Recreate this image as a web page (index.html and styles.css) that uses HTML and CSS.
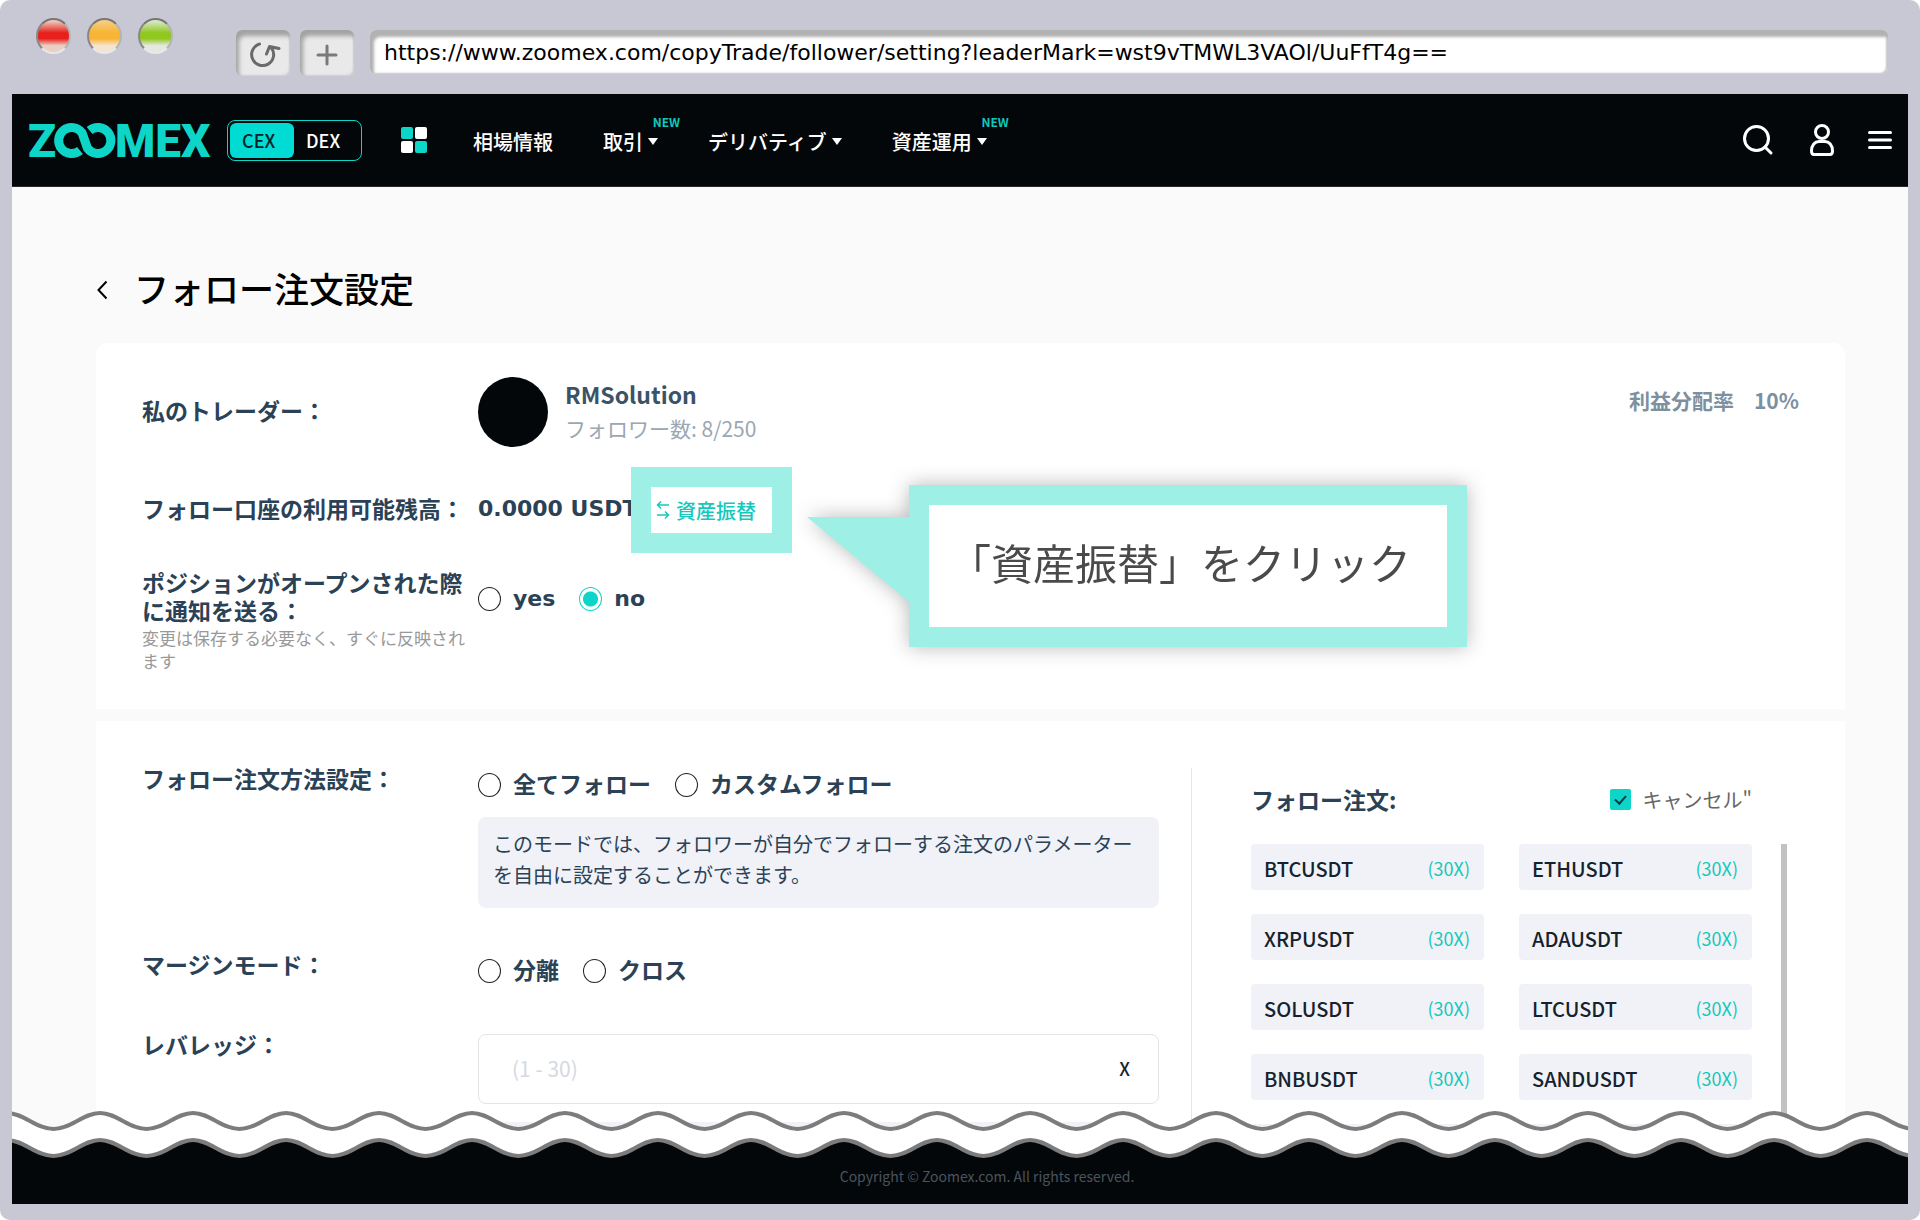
FILE: index.html
```html
<!DOCTYPE html>
<html lang="ja">
<head>
<meta charset="utf-8">
<title>フォロー注文設定 | ZOOMEX</title>
<link rel="stylesheet" href="styles.css">
</head>
<body>
<div class="window">
  <div class="chrome">
    <div class="lights">
      <span class="light light-red"></span>
      <span class="light light-amber"></span>
      <span class="light light-green"></span>
    </div>
    <div class="tools">
      <button class="tool" type="button" aria-label="再読み込み">
        <svg width="36" height="28" viewBox="-4 0 36 28" fill="none" stroke="#6a6a6a" stroke-width="3" stroke-linecap="round" stroke-linejoin="round"><path d="M10.500 3A11 11 0 1 0 22.500 7M17.500 13L20.500 5.500L30 7.500"/></svg>
      </button>
      <button class="tool" type="button" aria-label="新しいタブ">
        <svg width="22" height="22" viewBox="0 0 22 22" fill="none" stroke="#7a7a7a" stroke-width="3" stroke-linecap="round"><path d="M11 2V20M2 11H20"/></svg>
      </button>
    </div>
    <input class="address" type="text" aria-label="アドレス" value="https://www.zoomex.com/copyTrade/follower/setting?leaderMark=wst9vTMWL3VAOl/UuFfT4g==">
  </div>

  <div class="page">
    <header class="header">
      <a class="logo" href="#" aria-label="ZOOMEX">
        <svg class="logo-mark" width="184" height="37" viewBox="0 0 184 37">
          <text class="logo-text" x="-1" y="35">Z</text>
          <path d="M51 28.500A13 13 0 1 1 53 10.700L58.500 26.300A13 13 0 1 0 60.600 8.500" fill="none" stroke="#0dd5c8" stroke-width="9"/>
          <text class="logo-text" x="86" y="35">MEX</text>
        </svg>
      </a>
      <div class="switch">
        <button class="switch-item is-on" type="button">CEX</button>
        <button class="switch-item" type="button">DEX</button>
      </div>
      <svg class="apps" width="26" height="26" viewBox="0 0 26 26"><rect x="0" y="0" width="12" height="12" rx="2" fill="#0dd5c8"/><rect x="14" y="0" width="12" height="12" rx="2" fill="#fff"/><rect x="0" y="14" width="12" height="12" rx="2" fill="#fff"/><rect x="14" y="14" width="12" height="12" rx="2" fill="#0dd5c8"/></svg>
      <nav class="nav">
        <a class="nav-link" href="#">相場情報</a>
        <a class="nav-link has-menu" href="#">取引<span class="badge">NEW</span></a>
        <a class="nav-link has-menu" href="#">デリバティブ</a>
        <a class="nav-link has-menu" href="#">資産運用<span class="badge">NEW</span></a>
      </nav>
      <div class="actions">
        <button class="icon-button" type="button" aria-label="検索">
          <svg width="34" height="32" viewBox="0 0 34 32" fill="none" stroke="#fff" stroke-width="3" stroke-linecap="round"><circle cx="14.500" cy="14.500" r="12"/><path d="M23 23L29 29"/></svg>
        </button>
        <button class="icon-button" type="button" aria-label="アカウント">
          <svg width="24" height="32" viewBox="0 0 24 32" fill="none" stroke="#fff" stroke-width="3"><circle cx="12" cy="8" r="6.500"/><path d="M1.500 27C1.500 21 5 17.500 9 17.500H15C19 17.500 22.500 21 22.500 27Q22.500 30.500 20 30.500H4Q1.500 30.500 1.500 27Z"/></svg>
        </button>
        <button class="icon-button" type="button" aria-label="メニュー">
          <svg width="24" height="18" viewBox="0 0 24 18" fill="none" stroke="#fff" stroke-width="3" stroke-linecap="round"><path d="M1.500 1.500H22.500M1.500 9H22.500M1.500 16.500H22.500"/></svg>
        </button>
      </div>
    </header>

    <main class="main">
      <div class="title-bar">
        <a class="back" href="#" aria-label="戻る"><svg width="12" height="20" viewBox="0 0 12 20" fill="none" stroke="#000" stroke-width="2"><path d="M10.500 1.500L2.500 10L10.500 18.500"/></svg></a>
        <h1 class="title">フォロー注文設定</h1>
      </div>

      <section class="card card-account">
        <div class="row row-trader">
          <span class="label">私のトレーダー：</span>
          <div class="trader">
            <span class="avatar"></span>
            <div class="trader-text">
              <p class="trader-name">RMSolution</p>
              <p class="trader-count">フォロワー数: 8/250</p>
            </div>
            <p class="share"><span>利益分配率</span><span>10%</span></p>
          </div>
        </div>
        <div class="row row-balance">
          <span class="label">フォロー口座の利用可能残高：</span>
          <div class="balance">
            <span>0.0000 USDT</span>
            <button class="transfer" type="button">
              <svg width="14" height="20" viewBox="0 0 14 20" fill="none" stroke="#14c8bc" stroke-width="1.500"><path d="M13 5H2M5 1.500L1.500 5L5 8.500M1 15H12M9 11.500L12.500 15L9 18.500"/></svg>資産振替
            </button>
          </div>
        </div>
        <div class="row">
          <div>
            <p class="label">ポジションがオープンされた際<br>に通知を送る：</p>
            <p class="note">変更は保存する必要なく、すぐに反映され<br>ます</p>
          </div>
          <div class="choices choices-notify">
            <label class="choice choice-latin"><input class="radio" type="radio" name="notify">yes</label>
            <label class="choice choice-latin"><input class="radio" type="radio" name="notify" checked>no</label>
          </div>
        </div>
        <aside class="callout">
          <svg class="callout-tail" width="103" height="86" viewBox="0 0 103 86"><path d="M0 0H103V86Z" fill="#9ef0e6"/></svg>
          <p class="callout-text">「資産振替」をクリック</p>
        </aside>
      </section>

      <section class="card card-orders">
        <form class="form">
          <div class="row row-method">
            <span class="label">フォロー注文方法設定：</span>
            <div>
              <div class="choices">
                <label class="choice"><input class="radio" type="radio" name="method">全てフォロー</label>
                <label class="choice"><input class="radio" type="radio" name="method">カスタムフォロー</label>
              </div>
              <p class="tip">このモードでは、フォロワーが自分でフォローする注文のパラメーターを自由に設定することができます。</p>
            </div>
          </div>
          <div class="row row-margin">
            <span class="label">マージンモード：</span>
            <div class="choices">
              <label class="choice"><input class="radio" type="radio" name="margin">分離</label>
              <label class="choice"><input class="radio" type="radio" name="margin">クロス</label>
            </div>
          </div>
          <div class="row">
            <label class="label" for="leverage">レバレッジ：</label>
            <div>
              <div class="field">
                <input class="field-input" id="leverage" type="text" placeholder="(1 - 30)">
                <span class="field-unit">X</span>
              </div>
              <div class="tip-next"></div>
            </div>
          </div>
        </form>

        <div class="pairs">
          <div class="pairs-head">
            <h2 class="label">フォロー注文:</h2>
            <label class="cancel"><input class="check" type="checkbox" checked>キャンセル"</label>
          </div>
          <div class="pairs-body">
            <ul class="pair-list">
              <li class="pair"><span>BTCUSDT</span><span class="times">(30X)</span></li>
              <li class="pair"><span>ETHUSDT</span><span class="times">(30X)</span></li>
              <li class="pair"><span>XRPUSDT</span><span class="times">(30X)</span></li>
              <li class="pair"><span>ADAUSDT</span><span class="times">(30X)</span></li>
              <li class="pair"><span>SOLUSDT</span><span class="times">(30X)</span></li>
              <li class="pair"><span>LTCUSDT</span><span class="times">(30X)</span></li>
              <li class="pair"><span>BNBUSDT</span><span class="times">(30X)</span></li>
              <li class="pair"><span>SANDUSDT</span><span class="times">(30X)</span></li>
              <li class="pair-next"></li>
              <li class="pair-next"></li>
            </ul>
            <div class="scrollbar"></div>
          </div>
        </div>
      </section>
    </main>

    <footer class="footer">
      <svg class="tear" width="100%" height="56" aria-hidden="true">
        <defs>
          <pattern id="wave" width="93" height="56" patternUnits="userSpaceOnUse" patternTransform="translate(-5 0)">
            <path d="M-93 4C-76 4 -64 20 -46.500 20S-17 4 0 4S29 20 46.500 20S76 4 93 4S122 20 139.500 20V47C122 47 110 31 93 31S64 47 46.500 47S17 31 0 31S-29 47 -46.500 47S-76 31 -93 31Z" fill="#fff" stroke="#7c7c7c" stroke-width="4"/>
          </pattern>
        </defs>
        <rect width="100%" height="56" fill="url(#wave)"/>
      </svg>
      <p class="copyright">Copyright © Zoomex.com. All rights reserved.</p>
    </footer>
  </div>
</div>
</body>
</html>
```
FILE: styles.css
```css
* { box-sizing: border-box; }

body {
  margin: 0;
  background: #fff;
  color: #2b4256;
  font-family: "Noto Sans CJK JP", "Noto Sans", sans-serif;
  font-size: 20px;
}

p, h1, h2, ul { margin: 0; padding: 0; }
ul { list-style: none; }
a { color: inherit; text-decoration: none; }
button, input { font: inherit; color: inherit; }
button { border: 0; padding: 0; background: none; cursor: pointer; }
svg { display: block; }

/* Browser window */
.window {
  display: flex;
  flex-direction: column;
  min-height: 100vh;
  padding: 0 12px 16px;
  border-radius: 10px;
  background: #c8c8d4;
}

.chrome {
  display: flex;
  align-items: flex-start;
  height: 94px;
  padding: 18px 20px 0 24px;
}

.lights { display: flex; gap: 16px; }

.light {
  width: 35px;
  height: 36px;
  border-radius: 50%;
  border: 2px solid;
  border-color: #777 #b4b4b4 #e8e8e8 #888;
}

.light-red { background: linear-gradient(#ecc4b4 5%, #e8201c 40%, #e8201c 58%, #e8d0c4 80%); }
.light-amber { background: linear-gradient(#f4cc80 5%, #f8b434 40%, #f8b434 58%, #f4e4d0 80%); }
.light-green { background: linear-gradient(#d4e8c0 5%, #90c820 40%, #90c820 58%, #e4e8e0 80%); }

.tools {
  display: flex;
  gap: 10px;
  margin: 12px 16px 0 63px;
}

.tool {
  display: flex;
  align-items: center;
  justify-content: center;
  width: 54px;
  height: 46px;
  padding-top: 4px;
  border-radius: 6px;
  background: #e9e9e9;
  box-shadow: inset 3px 6px 4px #a2a2a2, inset -1px -1px 2px #ccc;
}

.address {
  flex: 1;
  min-width: 0;
  height: 44px;
  margin-top: 12px;
  padding: 2px 14px;
  border: 0;
  border-radius: 6px;
  background: #fff;
  box-shadow: inset 4px 7px 3px #b2b2b2, inset -2px -1px 2px #c4c4c4;
  color: #000;
  font-family: "DejaVu Sans", sans-serif;
  font-size: 22px;
  line-height: 26px;
}

.page {
  flex: 1;
  display: flex;
  flex-direction: column;
  background: #fafafa;
}

/* Site header */
.header {
  display: flex;
  align-items: center;
  height: 93px;
  padding: 0 16px 0 17px;
  border-bottom: 1px solid #24282b;
  background: #04070a;
  color: #fff;
}

.logo-mark { overflow: visible; }

.logo-text {
  fill: #0dd5c8;
  font-family: Roboto, sans-serif;
  font-size: 46px;
  font-weight: 900;
}

.switch {
  display: flex;
  margin-left: 14px;
  width: 135px;
  height: 41px;
  padding: 2px;
  border: 1px solid #0dd5c8;
  border-radius: 8px;
}

.switch-item {
  width: 64px;
  padding-left: 12px;
  border-radius: 6px;
  color: #fff;
  font-size: 18px;
  font-weight: 500;
  line-height: 24px;
  text-align: left;
}

.switch-item.is-on { background: #00dcd4; color: #04222a; }

.apps { margin-left: 39px; }

.nav {
  display: flex;
  gap: 50px;
  margin-left: 46px;
  padding-top: 3px;
}

.nav-link {
  position: relative;
  display: flex;
  align-items: center;
  gap: 5px;
  font-weight: 500;
  line-height: 30px;
  white-space: nowrap;
}

.has-menu::after {
  content: "";
  border: 5px solid transparent;
  border-top: 7px solid #fff;
  border-bottom: 0;
}

.badge {
  position: absolute;
  right: -22px;
  top: -12px;
  color: #0dc9bd;
  font-size: 12px;
  font-weight: 700;
  line-height: 14px;
}

.actions {
  display: flex;
  align-items: center;
  gap: 34px;
  margin-left: auto;
}

/* Page body */
.main {
  flex: 1;
  display: flex;
  flex-direction: column;
  padding: 73px 63px 0 84px;
}

.title-bar {
  display: flex;
  align-items: center;
  gap: 26px;
  margin-bottom: 27px;
}

.back { padding-top: 4px; }

.title {
  color: #000;
  font-size: 35px;
  font-weight: 500;
  line-height: 56px;
}

.card { background: #fff; }

.card-account {
  position: relative;
  margin-bottom: 12px;
  padding: 34px 46px 37px;
  border-radius: 12px 12px 0 0;
}

.row {
  display: grid;
  grid-template-columns: 336px 1fr;
}

.label {
  position: relative;
  top: -2px;
  font-size: 23px;
  font-weight: 700;
  line-height: 28px;
  white-space: nowrap;
}

.row-trader { align-items: center; margin-bottom: 20px; }

.trader { display: flex; align-items: center; gap: 17px; }
.trader-text { padding-bottom: 2px; }

.avatar {
  width: 70px;
  height: 70px;
  border-radius: 50%;
  background: #04070a;
}

.trader-name {
  color: #3c5266;
  font-size: 23px;
  font-weight: 700;
  line-height: 34px;
}

.trader-count { color: #9ba7b2; font-size: 21px; line-height: 34px; }

.share {
  display: flex;
  gap: 20px;
  margin: 0 0 24px auto;
  color: #7d90a0;
  font-size: 21px;
  font-weight: 700;
  line-height: 28px;
}

.row-balance { align-items: center; margin-bottom: 17px; }

.balance {
  position: relative;
  display: flex;
  align-items: center;
  height: 86px;
  padding-bottom: 4px;
  font-family: "DejaVu Sans", sans-serif;
  font-size: 22px;
  font-weight: 700;
}

.transfer {
  position: absolute;
  left: 153px;
  top: 0;
  display: flex;
  align-items: center;
  gap: 6px;
  width: 161px;
  height: 86px;
  padding-left: 5px;
  border: 20px solid #9ef0e6;
  background: #fff;
  color: #14c8bc;
  font-family: "Noto Sans CJK JP", sans-serif;
  font-size: 20px;
  font-weight: 500;
  white-space: nowrap;
}

.note {
  color: #999;
  font-size: 17px;
  line-height: 23px;
  white-space: nowrap;
}

.choices {
  display: flex;
  align-items: flex-start;
  gap: 24px;
  padding-top: 5px;
}

.choices-notify { padding-top: 17px; }

.choice {
  display: flex;
  align-items: flex-start;
  gap: 12px;
  font-size: 23px;
  font-weight: 700;
  line-height: 20px;
}

.choice-latin { font-family: "DejaVu Sans", sans-serif; font-size: 22px; line-height: 24px; }

.radio {
  appearance: none;
  width: 23px;
  height: 24px;
  margin: 0;
  border: 1px solid #222;
  border-radius: 50%;
  background: #fff;
}

.radio:checked {
  border-color: #0dd5c8;
  background: radial-gradient(circle, #0dd5c8 7px, #fff 8px);
}

.callout {
  position: absolute;
  left: 813px;
  top: 142px;
  border: 20px solid #9ef0e6;
  background: #fff;
  filter: drop-shadow(0 0 10px rgba(0, 0, 0, 0.28));
}

.callout-tail {
  position: absolute;
  right: 100%;
  top: 12px;
  margin-right: 19px;
}

.callout-text {
  padding: 26px 36px 34px 20px;
  color: #4a4a4a;
  font-size: 42px;
  font-weight: 400;
  line-height: 62px;
  white-space: nowrap;
}

/* Order settings */
.card-orders {
  flex: 1;
  display: grid;
  grid-template-columns: 1fr 596px;
  gap: 32px;
  padding: 47px 58px 0 46px;
}

.form .label, .pairs .label { line-height: 24px; }

.row-method { margin-bottom: 46px; }
.row-margin { margin-bottom: 51px; }

.tip {
  margin-top: 20px;
  padding: 11px 15px 18px;
  border-radius: 8px;
  background: #f1f2f8;
  line-height: 31px;
}

.field {
  display: flex;
  align-items: center;
  height: 70px;
  padding: 0 28px 2px 33px;
  border: 1px solid #e4e4e8;
  border-radius: 8px;
  margin-bottom: 18px;
}

.field-input {
  flex: 1;
  min-width: 0;
  padding: 0;
  border: 0;
  outline: 0;
  background: none;
  font-size: 21px;
}

.field-input::placeholder { color: #d4d9e2; opacity: 1; }
.field-unit { color: #1a2530; font-size: 18px; font-weight: 500; }

.tip-next { height: 11px; border-radius: 8px 8px 0 0; background: #f1f2f8; }

.pairs {
  padding: 21px 0 0 59px;
  border-left: 1px solid #e6e6ea;
}

.pairs-head {
  display: flex;
  align-items: flex-start;
  justify-content: space-between;
  margin: 0 35px 31px 0;
}

.cancel {
  display: flex;
  align-items: flex-start;
  gap: 12px;
  color: #666;
  line-height: 22px;
}

.check {
  appearance: none;
  display: grid;
  place-items: center;
  width: 21px;
  height: 21px;
  margin: 0;
  border-radius: 2px;
  background: #0dd5c8;
}

.check:checked::before {
  content: "";
  width: 5px;
  height: 9px;
  margin-bottom: 3px;
  border: solid #063a44;
  border-width: 0 2px 2px 0;
  transform: rotate(42deg);
}

.pairs-body { display: flex; gap: 29px; }

.pair-list {
  flex: 1;
  display: grid;
  grid-template-columns: 1fr 1fr;
  gap: 24px 35px;
}

.pair {
  display: flex;
  align-items: center;
  justify-content: space-between;
  height: 46px;
  padding: 2px 14px 0 13px;
  border-radius: 4px;
  background: #f1f2f8;
  color: #16222c;
  font-weight: 500;
}

.times { color: #14c8bc; font-size: 18px; font-weight: 400; }

.pair-next { height: 8px; border-radius: 4px 4px 0 0; background: #f1f2f8; }

.scrollbar { width: 6px; background: #c2c2c2; }

/* Footer, with the torn-paper band over its top edge */
.footer {
  position: relative;
  height: 69px;
  padding: 31px 0 0 54px;
  background: #04070a;
}

.tear {
  position: absolute;
  left: 0;
  top: -26px;
}

.copyright {
  color: #4a545e;
  font-size: 14px;
  line-height: 20px;
  text-align: center;
}
```
